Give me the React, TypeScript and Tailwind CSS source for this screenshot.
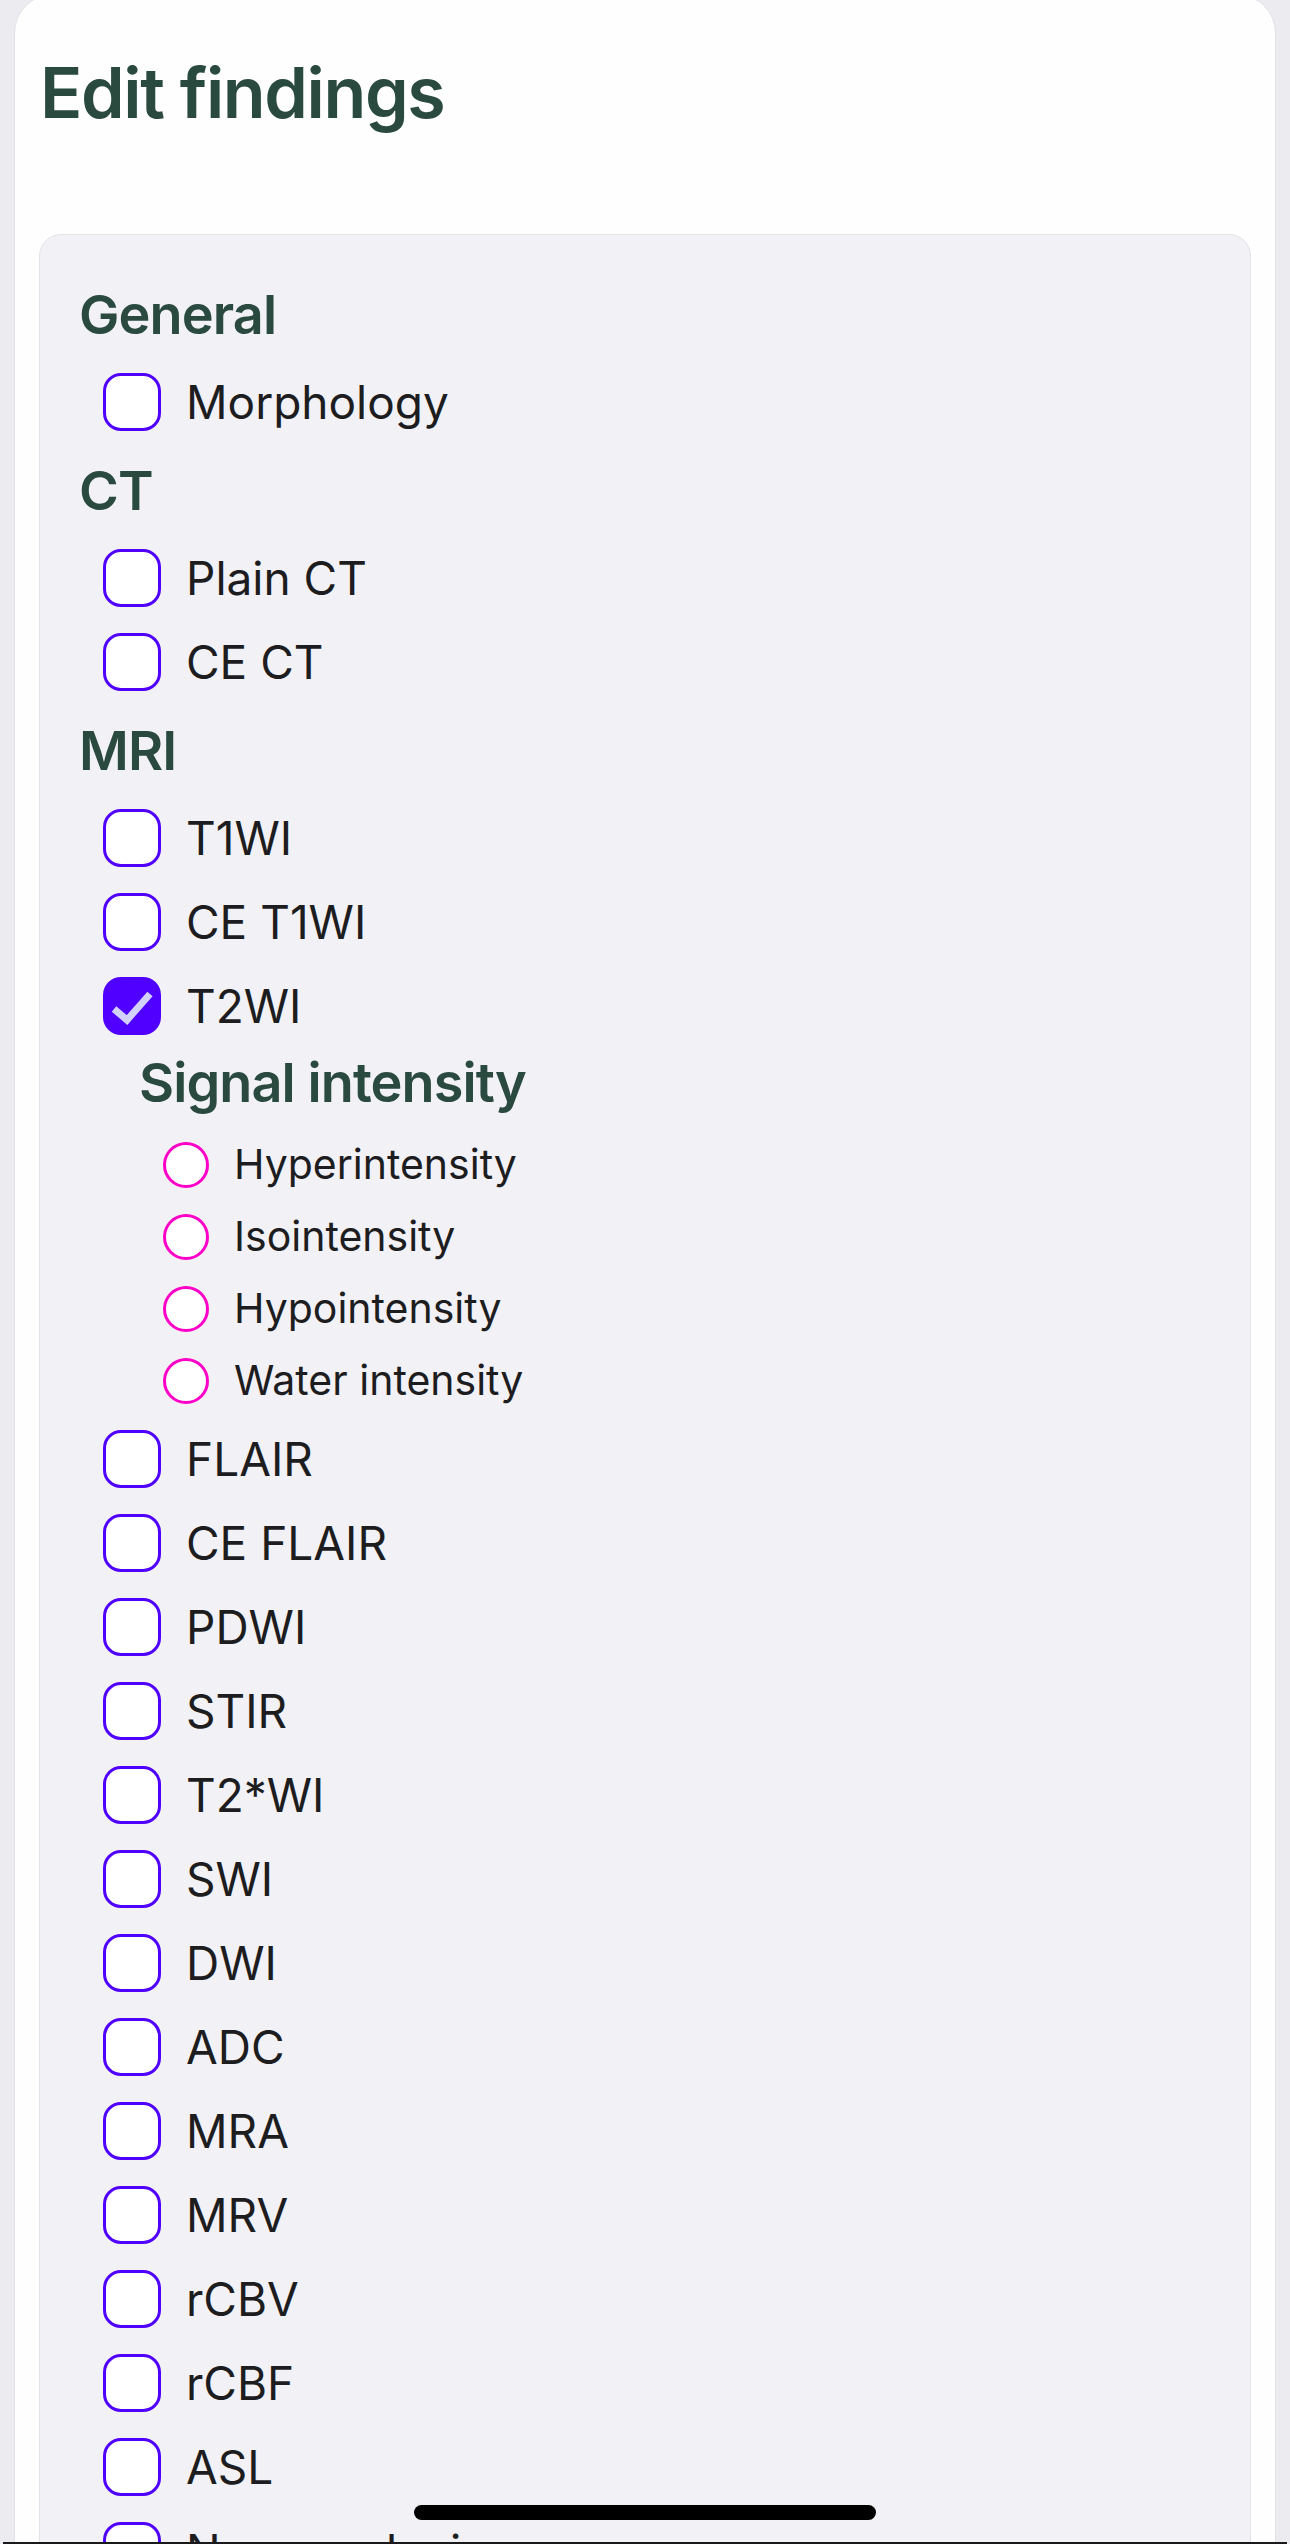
import React from "react";

type Item =
  | { kind: "header"; label: string }
  | { kind: "check"; label: string; checked?: boolean }
  | { kind: "sub"; label: string; options: string[] };

const items: Item[] = [
  { kind: "header", label: "General" },
  { kind: "check", label: "Morphology" },
  { kind: "header", label: "CT" },
  { kind: "check", label: "Plain CT" },
  { kind: "check", label: "CE CT" },
  { kind: "header", label: "MRI" },
  { kind: "check", label: "T1WI" },
  { kind: "check", label: "CE T1WI" },
  { kind: "check", label: "T2WI", checked: true },
  {
    kind: "sub",
    label: "Signal intensity",
    options: ["Hyperintensity", "Isointensity", "Hypointensity", "Water intensity"],
  },
  { kind: "check", label: "FLAIR" },
  { kind: "check", label: "CE FLAIR" },
  { kind: "check", label: "PDWI" },
  { kind: "check", label: "STIR" },
  { kind: "check", label: "T2*WI" },
  { kind: "check", label: "SWI" },
  { kind: "check", label: "DWI" },
  { kind: "check", label: "ADC" },
  { kind: "check", label: "MRA" },
  { kind: "check", label: "MRV" },
  { kind: "check", label: "rCBV" },
  { kind: "check", label: "rCBF" },
  { kind: "check", label: "ASL" },
  { kind: "check", label: "Neuromelanin" },
];

const font = { fontFamily: "Inter, 'Noto Sans', sans-serif" };

function CheckBox({ checked }: { checked?: boolean }) {
  if (checked) {
    return (
      <div className="w-[58px] h-[58px] rounded-[18px] bg-[#5000ff] flex items-center justify-center shrink-0">
        <svg width="58" height="58" viewBox="0 0 58 58">
          <polyline
            points="11,32 24,43 47,17"
            fill="none"
            stroke="#d2d0ff"
            strokeWidth="7"
            strokeLinecap="butt"
            strokeLinejoin="miter"
          />
        </svg>
      </div>
    );
  }
  return <div className="w-[58px] h-[58px] rounded-[18px] border-[3px] border-[#5000ff] bg-white shrink-0" />;
}

export default function App() {
  return (
    <div
      className="relative w-[1290px] h-[2544px] overflow-hidden bg-[#ecebf0]"
      style={font}
    >
      <div className="mx-[14px] -mt-[6px] rounded-[39px] border border-[#e2e1e6] bg-[#fefefe] px-[24px] pt-[56px] pb-[200px]">
        <h1 className="ml-[1px] h-[84px] leading-[84px] text-[70px] font-semibold tracking-[-1.4px] text-[#2a4a40]">
          Edit findings
        </h1>
        <div className="mt-[99px] rounded-[22px] border border-[#e3e2e8] bg-[#f2f1f6] pt-[33px] pb-[60px]">
          {items.map((it, i) => {
            if (it.kind === "header") {
              return (
                <div key={i} className="h-[92px] flex items-center pl-[39px]">
                  <span className="text-[54px] font-semibold tracking-[-0.9px] text-[#2a4a40]">
                    {it.label}
                  </span>
                </div>
              );
            }
            if (it.kind === "check") {
              return (
                <div key={i} className="h-[84px] flex items-center pl-[63px] gap-[25px]">
                  <CheckBox checked={it.checked} />
                  <span className="text-[46px] text-[#1d1d1f]">{it.label}</span>
                </div>
              );
            }
            return (
              <div key={i}>
                <div className="h-[68px] flex items-center pl-[99px]">
                  <span className="text-[54px] font-semibold tracking-[-0.9px] text-[#2a4a40]">
                    {it.label}
                  </span>
                </div>
                <div className="mt-[13px]">
                  {it.options.map((o) => (
                    <div key={o} className="h-[72px] flex items-center pl-[123px] gap-[25px]">
                      <div className="w-[46px] h-[46px] rounded-full border-[3px] border-[#ff00c8] bg-white shrink-0" />
                      <span className="text-[41px] text-[#1d1d1f]">{o}</span>
                    </div>
                  ))}
                </div>
              </div>
            );
          })}
        </div>
      </div>
      <div className="absolute left-[414px] top-[2505px] w-[462px] h-[15px] rounded-full bg-black" />
      <div className="absolute left-[3px] right-[3px] bottom-0 h-[2px] bg-[#1a1a1a]" />
    </div>
  );
}
